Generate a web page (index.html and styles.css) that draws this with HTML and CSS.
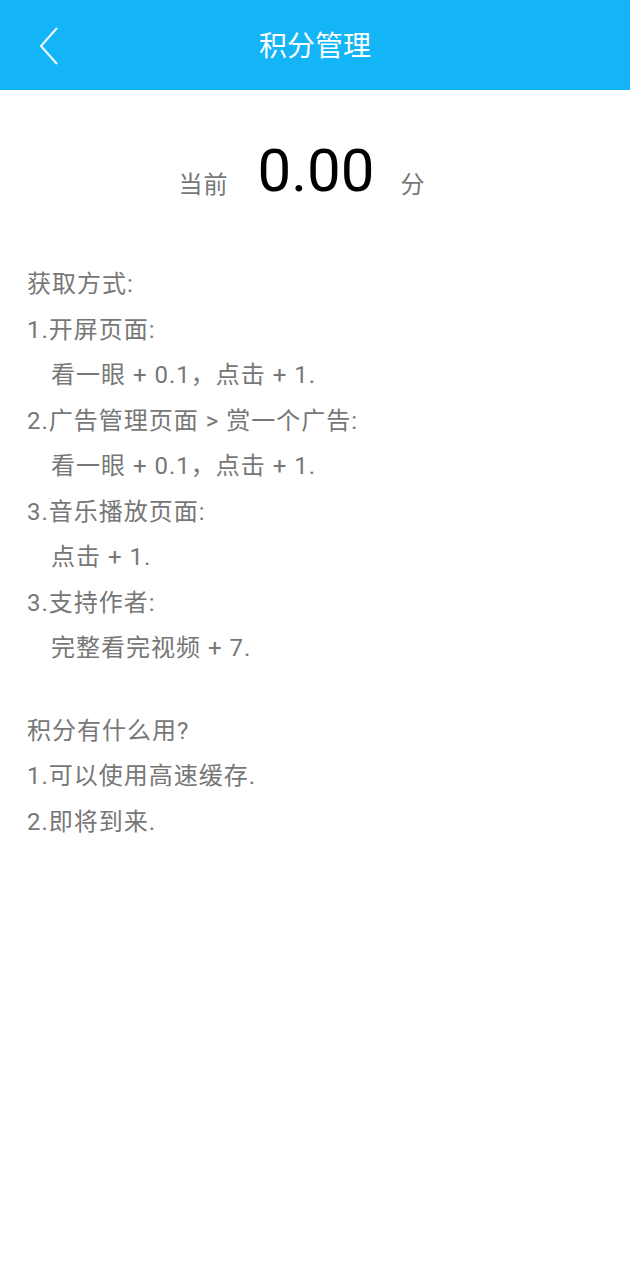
FILE: index.html
```html
<!DOCTYPE html>
<html lang="zh-CN">
<head>
    <meta charset="UTF-8">
    <meta name="viewport" content="width=device-width, initial-scale=1.0">
    <title>积分管理</title>
    <link rel="stylesheet" href="styles.css">
</head>
<body>
    <div class="toolbar">
        <div class="back">
            <svg width="22" height="40" viewBox="0 0 22 40">
                <polyline points="19,2 3,20 19,38" fill="none" stroke="#e6f6fe" stroke-width="2.2" stroke-linejoin="miter"/>
            </svg>
        </div>
        <div class="title">积分管理</div>
    </div>

    <div class="score">
        <span class="unit">当前</span>
        <span class="value">0.00</span>
        <span class="unit">分</span>
    </div>

    <div class="info first">
        <div class="line">获取方式:</div>
        <div class="line">1.开屏页面:</div>
        <div class="line sub">看一眼 + 0.1，点击 + 1.</div>
        <div class="line">2.广告管理页面 &gt; 赏一个广告:</div>
        <div class="line sub">看一眼 + 0.1，点击 + 1.</div>
        <div class="line">3.音乐播放页面:</div>
        <div class="line sub">点击 + 1.</div>
        <div class="line">3.支持作者:</div>
        <div class="line sub">完整看完视频 + 7.</div>
    </div>

    <div class="info second">
        <div class="line">积分有什么用?</div>
        <div class="line">1.可以使用高速缓存.</div>
        <div class="line">2.即将到来.</div>
    </div>
</body>
</html>
```

FILE: styles.css
```css
body {
    margin: 0;
    font-family: Roboto, "Noto Sans CJK SC", sans-serif;
    background-color: #fff;
}

.toolbar {
    position: relative;
    height: 90px;
    background-color: #13b5f6;
    display: flex;
    align-items: center;
    justify-content: center;
}

.back {
    position: absolute;
    left: 38px;
    top: 26px;
    width: 22px;
    height: 40px;
}

.title {
    color: #fff;
    font-size: 28px;
    margin-bottom: 3px;
}

.score {
    display: flex;
    justify-content: center;
    align-items: center;
    height: 160px;
    padding-right: 26px;
}

.score .unit {
    font-size: 24px;
    letter-spacing: 1px;
    color: #777;
    margin-top: 24px;
}

.score .value {
    font-size: 60px;
    color: #000;
    margin: 0 26px 0 29px;
}

.info {
    padding-left: 27px;
    color: #777;
    font-size: 24px;
    letter-spacing: 1px;
    line-height: 45.5px;
}

.first {
    margin-top: 12px;
}

.second {
    margin-top: 37px;
}

.sub {
    padding-left: 24px;
}
```
